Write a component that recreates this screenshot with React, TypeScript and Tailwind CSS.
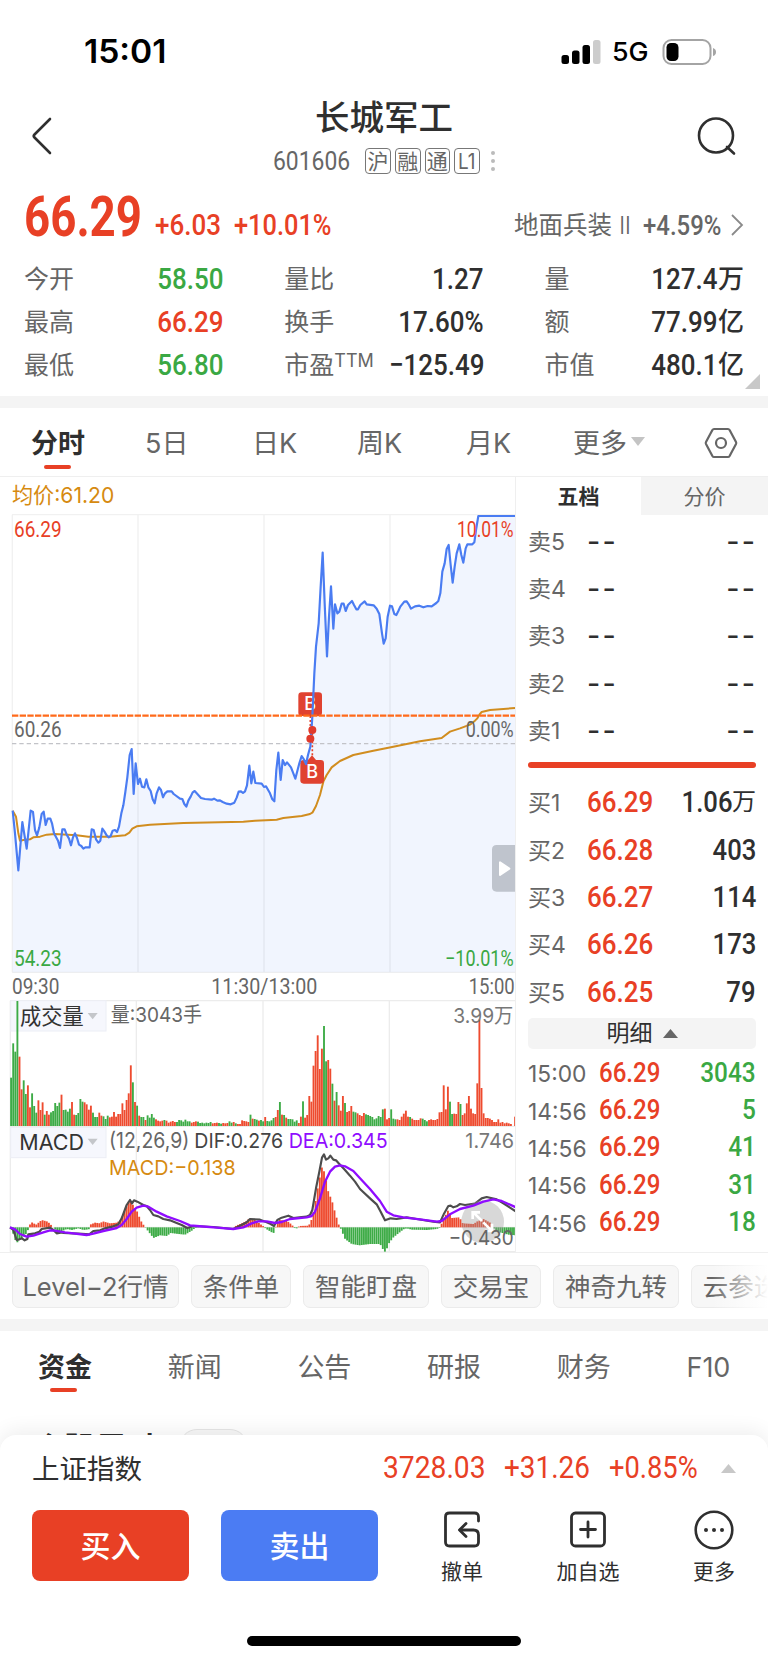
import { clsx } from 'clsx'

const NUM = "font-['Roboto','Noto_Sans_CJK_SC',sans-serif]"
const RED = '#e84025'
const GREEN = '#3aa843'

const stats = [
  [
    { label: '今开', value: '58.50', color: 'text-[#3aa843]' },
    { label: '最高', value: '66.29', color: 'text-[#e84025]' },
    { label: '最低', value: '56.80', color: 'text-[#3aa843]' },
  ],
  [
    { label: '量比', value: '1.27', color: 'text-[#2f2f2f]' },
    { label: '换手', value: '17.60%', color: 'text-[#2f2f2f]' },
    { label: '市盈', sup: 'TTM', value: '−125.49', color: 'text-[#2f2f2f]' },
  ],
  [
    { label: '量', value: '127.4', unit: '万', color: 'text-[#2f2f2f]' },
    { label: '额', value: '77.99', unit: '亿', color: 'text-[#2f2f2f]' },
    { label: '市值', value: '480.1', unit: '亿', color: 'text-[#2f2f2f]' },
  ],
]

const sells = ['卖5', '卖4', '卖3', '卖2', '卖1']
const buys = [
  { label: '买1', price: '66.29', qty: '1.06', unit: '万' },
  { label: '买2', price: '66.28', qty: '403' },
  { label: '买3', price: '66.27', qty: '114' },
  { label: '买4', price: '66.26', qty: '173' },
  { label: '买5', price: '66.25', qty: '79' },
]
const trades = [
  ['15:00', '3043'],
  ['14:56', '5'],
  ['14:56', '41'],
  ['14:56', '31'],
  ['14:56', '18'],
]

// chart data, in @3x points
const PRICE =
  '38,932 45,1000 55,1111 67,966 80,1046 92,932 99,936 105,990 111,1006 118,982 125,942 131,935 137,975 143,956 151,956 156,970 162,1000 174,1022 180,1044 187,988 194,988 200,1004 207,1016 213,1036 219,1012 225,1000 231,1014 237,1034 244,1038 250,1046 256,1042 269,1042 275,988 281,990 288,1018 295,1028 301,1022 307,986 313,994 320,1006 326,1012 332,1008 338,992 345,990 351,996 357,980 364,940 370,916 376,876 382,832 389,765 395,747 401,882 407,790 414,852 420,836 426,860 433,862 439,838 445,862 452,873 458,898 464,910 470,880 477,862 483,870 489,892 495,880 502,874 515,874 521,882 540,896 547,897 553,912 559,920 565,902 572,890 578,877 584,873 603,894 615,897 635,899 642,896 652,902 660,901 668,906 680,911 692,913 703,908 710,893 716,875 723,874 729,879 735,874 741,856 748,797 754,850 760,815 766,849 785,851 792,861 798,859 810,880 817,898 823,904 829,810 835,758 842,840 848,780 855,795 861,787 873,802 880,820 886,836 898,790 905,768 911,777 918,792 924,765 931,740 937,650 943,520 948,440 956,370 962,260 968,158 974,310 981,469 987,350 993,259 1000,386 1005,313 1012,340 1018,335 1025,311 1031,311 1037,333 1044,315 1056,303 1062,315 1069,328 1074,328 1081,315 1094,304 1100,313 1121,316 1130,326 1138,342 1146,400 1151,431 1157,415 1163,350 1170,317 1176,319 1183,342 1189,345 1195,333 1201,320 1213,305 1220,304 1226,313 1233,326 1245,319 1258,317 1270,322 1283,318 1295,319 1309,309 1315,303 1321,280 1327,215 1334,190 1340,147 1346,135 1352,195 1358,248 1364,200 1370,160 1378,133 1384,165 1390,188 1397,145 1402,133 1417,133 1423,127 1428,90 1435,48 1545,48'
const AVG =
  '38,932 48,950 55,1000 60,1022 70,1020 90,1018 100,1012 120,1010 140,1004 165,1002 230,1006 265,1010 330,1010 375,1006 388,998 397,986 410,979 450,974 550,969 730,965 765,962 830,959 850,954 905,948 930,942 938,937 948,918 960,885 970,845 980,825 995,802 1020,783 1060,765 1120,752 1180,740 1260,724 1325,714 1350,695 1380,685 1410,674 1425,662 1432,655 1438,644 1445,636 1470,630 1545,624'

// one bar per minute, negative means the price fell in that minute
const VOLUME = [
  -145, -248, -223, -375, 208, 110, -137, -96, 122, 56, -98, -60, -40, 77, 48, 71, -34, 45, 34, -41, -45, -69, -60, -70,
  94, -48, -49, -43, -52, 72, 34, -33, -39, -81, -73, 71, 65, 49, 61, -40, -27, -27, 40, 31, -29, -21, -31, 26, 28, 42, 28,
  36, 36, 68, 48, 78, 98, 182, -131, 72, -61, 31, -27, -27, 18, -32, -25, -36, -25, 20, 16, 14, 16, -18, 16, 10, 13, 15,
  12, -12, -18, -17, -13, -19, -14, -14, 10, 12, 14, -13, -9, -10, -8, -10, -9, -12, 8, 9, 10, -9, -7, 9, 8, 9, -14, -10,
  12, -8, 6, 6, 17, 15, 14, 12, -34, 22, -21, -19, 16, -18, -14, 27, -15, -14, -17, -24, 27, 48, -72, 34, -33, 25, -21,
  -21, -20, -13, -17, 9, 28, -74, 25, 33, 90, 73, 181, 225, 272, 171, 232, -300, -194, 198, 172, -127, 76, -102, 62, 46,
  90, -69, 42, 45, 60, -43, -41, 38, 33, 30, 39, -35, -33, -30, -27, -20, -23, -30, -27, -50, 52, 20, 24, -50, -22, -20,
  20, 18, 28, 37, 46, 28, -27, 22, 18, 18, 18, 23, -22, -18, -14, 18, 20, 18, 18, 21, 41, 42, 122, 50, 118, -73, -36, 37,
  36, 72, -66, 33, 38, 68, 90, 52, 38, 36, 128, 320, 114, 38, 24, 24, 22, 18, 12, 12, 20, 10, 12, 8, 10, 8, 6, 0, 28,
]

const HIST = [
  [33, 0], [49, -48], [58, -38], [70, -28], [82, -15], [86, 4], [95, 15], [108, 8], [125, 22], [143, 17], [158, 2],
  [162, -5], [180, -14], [200, -5], [215, -8], [235, -3], [250, -8], [266, -6], [270, 8], [285, 14], [300, 12],
  [308, 18], [330, 12], [350, 14], [362, 22], [372, 45], [389, 84], [400, 65], [410, 50], [422, 20], [433, 3],
  [440, -6], [460, -32], [480, -24], [500, -26], [512, -17], [535, -20], [555, -22], [575, -10], [585, -2], [600, 0],
  [700, 0], [710, 6], [725, 12], [738, 18], [748, 27], [762, 24], [775, 14], [790, 3], [797, -4], [820, -18],
  [825, -5], [829, 10], [838, 22], [860, 20], [875, 8], [883, -2], [890, -3], [898, 4], [925, 5], [930, 12],
  [937, 30], [945, 70], [955, 130], [967, 187], [975, 155], [987, 95], [993, 90], [1002, 55], [1015, 10],
  [1022, -4], [1035, -35], [1055, -50], [1078, -54], [1110, -50], [1140, -50], [1152, -72], [1157, -74],
  [1165, -50], [1180, -30], [1195, -18], [1210, -6], [1220, -3], [1235, -7], [1280, -8], [1310, -5], [1320, -1],
  [1328, 20], [1345, 53], [1355, 28], [1378, 30], [1388, 12], [1420, 10], [1432, 18], [1450, 25], [1470, 14],
  [1478, 0], [1485, -6], [1500, -15], [1525, -22], [1548, -24],
]
const DIF =
  '30,727 40,735 50,765 58,763 66,760 74,766 82,762 85,748 105,745 118,740 125,732 150,728 160,735 170,745 185,742 190,744 235,746 268,748 280,738 300,736 315,730 340,724 355,718 365,700 380,660 390,645 396,655 402,646 412,650 430,660 440,663 450,675 460,690 475,694 490,702 510,706 530,714 545,720 562,729 580,723 640,726 700,732 720,722 740,712 750,702 780,704 800,712 812,717 822,723 832,705 845,698 865,692 880,699 905,696 920,695 930,690 937,675 948,610 958,560 966,518 972,508 978,524 985,520 991,512 1000,524 1008,526 1016,535 1035,555 1050,572 1065,590 1080,612 1110,640 1130,658 1142,680 1155,706 1172,700 1190,702 1220,697 1250,702 1300,710 1320,712 1332,686 1345,663 1352,662 1360,667 1370,664 1380,657 1395,660 1425,656 1445,640 1460,636 1490,643 1510,655 1530,668 1548,680'
const DEA =
  '30,727 45,733 60,747 80,755 100,752 130,742 150,736 165,737 195,742 260,750 280,746 310,738 350,729 365,720 380,702 395,680 410,668 430,662 445,665 470,680 500,694 540,708 570,721 590,723 650,728 700,732 730,727 755,715 775,709 800,709 825,714 845,711 870,702 920,697 935,693 945,680 960,640 975,590 990,560 1005,545 1020,541 1035,544 1060,558 1080,580 1110,612 1140,648 1160,680 1180,691 1210,697 1260,703 1310,710 1325,708 1350,688 1380,672 1420,662 1450,650 1480,643 1505,648 1548,667'

const histAt = (x: number) => {
  const i = HIST.findIndex((p) => p[0] >= x)
  if (i <= 0) return 0
  const [x0, y0] = HIST[i - 1]
  const [x1, y1] = HIST[i]
  return y0 + ((y1 - y0) * (x - x0)) / (x1 - x0)
}

type LabelProps = {
  x: number
  y: number
  w: number
  fill?: string
  size?: number
  sans?: boolean
  weight?: number
  children: string
}

const Label = ({ x, y, w, fill = '#666', size = 66, sans, weight = 400, children }: LabelProps) => (
  <text
    x={x}
    y={y}
    textLength={w}
    lengthAdjust="spacingAndGlyphs"
    fill={fill}
    fontSize={size}
    fontWeight={weight}
    fontFamily={sans ? "Inter, 'Noto Sans CJK SC', sans-serif" : 'Roboto, sans-serif'}
  >
    {children}
  </text>
)

const Buy = ({ x, y }: { x: number; y: number }) => (
  <g>
    <rect x={x} y={y} width="71" height="71" rx="10" fill="#e04230" />
    <text x={x + 35.5} y={y + 54} textAnchor="middle" fontSize="54" fontWeight="500" fill="#fff" fontFamily="Inter, sans-serif">
      B
    </text>
  </g>
)

const PriceChart = () => (
  <svg width="516" height="486" viewBox="0 42 1548 1458" className="block max-w-none">
    <path d="M36 44H1548M36 1417H1548M37 44V1417M414 44V1417M792 44V1417M1170 44V1417" stroke="#f1f1f1" strokeWidth="4" />
    <polygon points={`${PRICE} 1545,1417 38,1417`} fill="#4a7cf2" fillOpacity="0.08" />
    <path d="M36 731H1545" stroke="#c2c3c8" strokeWidth="4" strokeDasharray="13 9" />
    <polyline points={AVG} fill="none" stroke="#d18d1f" strokeWidth="6" strokeLinejoin="round" />
    <Buy x={895} y={577} />
    <path d="M936 766l-14 16h28z" fill="#e04230" />
    <Buy x={901} y={780} />
    <path d="M931 648V710M937 700V768" stroke={RED} strokeWidth="5" strokeDasharray="6 6" />
    <polyline points={PRICE} fill="none" stroke="#4a7cf2" strokeWidth="6.5" strokeLinejoin="round" />
    <circle cx="937" cy="690" r="12" fill="#e03a2c" />
    <circle cx="931" cy="716" r="12" fill="#e03a2c" />
    <path d="M36 647H1545" stroke="#ff6a1a" strokeWidth="7" strokeDasharray="19 4" />
    <Label x={42} y={111} w={143} fill={RED}>66.29</Label>
    <Label x={1371} y={111} w={170} fill={RED}>10.01%</Label>
    <Label x={42} y={711} w={143}>60.26</Label>
    <Label x={1397} y={711} w={144}>0.00%</Label>
    <Label x={42} y={1397} w={143} fill={GREEN}>54.23</Label>
    <Label x={1335} y={1397} w={206} fill={GREEN}>−10.01%</Label>
    <Label x={36} y={1481} w={142}>09:30</Label>
    <Label x={634} y={1481} w={318}>11:30/13:00</Label>
    <Label x={1406} y={1481} w={138}>15:00</Label>
    <path d="M1548 1035h-58q-14 0-14 14v112q0 14 14 14h58z" fill="#bfc4cd" />
    <path d="M1500 1087v38l28-19z" fill="#fff" stroke="#fff" strokeWidth="6" strokeLinejoin="round" />
  </svg>
)

const VolumeChart = () => (
  <svg width="516" height="127" viewBox="0 45 1548 381" className="block max-w-none">
    <path d="M30 47H1548M30 424H1548M31 47V426M409 47V426M789 47V426M1168 47V426" stroke="#ececec" strokeWidth="4" />
    <rect x="32" y="47" width="286" height="91" fill="#f6f7fd" stroke="#eceef5" strokeWidth="3" />
    {VOLUME.map((v, i) => (
      <rect key={i} x={30.5 + i * 6.3} y={423 - Math.abs(v)} width="5.6" height={Math.abs(v)} fill={v > 0 ? '#ee4b2f' : '#3dab46'} />
    ))}
    <Label x={60} y={117} w={191} size={64} fill="#333" sans>成交量</Label>
    <path d="M263 84h30l-15 19z" fill="#c4c6ca" />
    <Label x={332} y={110} w={274} size={62} sans>量:3043手</Label>
    <Label x={1360} y={113} w={180} size={61} fill="#777" sans>3.99万</Label>
  </svg>
)

const MacdChart = () => (
  <svg width="516" height="126" viewBox="0 426 1548 378" className="block max-w-none">
    <path d="M30 800H1548M31 426V800M409 426V800M789 426V800M1168 426V800" stroke="#ececec" strokeWidth="4" />
    <rect x="32" y="427" width="286" height="91" fill="#f6f7fd" stroke="#eceef5" strokeWidth="3" />
    <path d="M30 727H1548" stroke="#e2e2e2" strokeWidth="2" />
    {VOLUME.map((_, i) => {
      const v = histAt(33 + i * 6.3)
      return <rect key={i} x={30.5 + i * 6.3} y={v > 0 ? 727 - v : 727} width="5.6" height={Math.abs(v)} fill={v > 0 ? '#ee4b2f' : '#3dab46'} />
    })}
    <polyline points={DIF} fill="none" stroke="#4d4d4d" strokeWidth="6.5" strokeLinejoin="round" />
    <circle cx="1448" cy="710" r="64" fill="#999" fillOpacity="0.38" />
    <path d="M1446 708l-26-26M1418 702v-20h22M1450 712l24 24M1476 716v22h-22" fill="none" stroke="#fff" strokeWidth="8" />
    <polyline points={DEA} fill="none" stroke="#8f0cff" strokeWidth="7" strokeLinejoin="round" />
    <Label x={58} y={495} w={194} size={66} fill="#333" sans>MACD</Label>
    <path d="M263 461h30l-15 19z" fill="#c4c6ca" />
    <Label x={327} y={488} w={241} size={64} sans>(12,26,9)</Label>
    <Label x={583} y={488} w={266} size={62} fill="#444" sans>DIF:0.276</Label>
    <Label x={866} y={488} w={297} size={62} fill="#8f0cff" sans>DEA:0.345</Label>
    <Label x={327} y={571} w={380} size={62} fill="#d68a10" sans>MACD:−0.138</Label>
    <Label x={1396} y={490} w={146} size={61} fill="#777" sans>1.746</Label>
    <Label x={1346} y={779} w={195} size={61} sans>−0.430</Label>
  </svg>
)

const StatusBar = () => (
  <div className="flex h-[90px] items-start justify-between pl-[84px] pr-[51px] pt-[31px]">
    <div className="origin-left scale-x-[1.05] text-[32px] font-semibold leading-[41px] text-black">15:01</div>
    <div className="flex items-center pt-[2px] text-black">
      <svg width="40" height="36" viewBox="0 0 40 36">
        <rect x="0.5" y="21" width="7.5" height="9" rx="2.5" />
        <rect x="11" y="16.500" width="7.500" height="13.500" rx="2.5" />
        <rect x="21.500" y="11" width="7.500" height="19" rx="2.5" />
        <rect x="32" y="6" width="7.500" height="24" rx="2.5" fill="#ccc" />
      </svg>
      <span className="ml-[11px] w-[38px] origin-left scale-x-[1.03] pt-px text-[26px] font-medium leading-9">5G</span>
      <svg width="55" height="36" viewBox="0 0 55 36" className="ml-[12px]">
        <rect x="1.5" y="6" width="47" height="24" rx="8" fill="none" stroke="#a4a4a4" strokeWidth="2" />
        <rect x="4.500" y="9" width="12" height="18" rx="4.5" />
        <path d="M51 14q3 1 3 4t-3 4z" fill="#a4a4a4" />
      </svg>
    </div>
  </div>
)

const Header = () => (
  <div className="flex h-[95px] justify-between pl-[31px] pr-[31px]">
    <svg width="22" height="92" viewBox="0 0 22 92" fill="none" stroke="#2f2f2f" strokeWidth="2.6" strokeLinecap="round" strokeLinejoin="round">
      <path d="M19 29L3.500 44.500Q2 46 3.500 47.500L19 63" />
    </svg>
    <div className="flex flex-col items-center pl-[18px]">
      <h1 className="pt-[4px] text-[34.500px] font-medium leading-[48px] text-[#2f2f2f]">长城军工</h1>
      <div className="flex items-center gap-1 pt-[5px]">
        <span className={clsx(NUM, 'w-[88px] origin-left scale-x-[0.88] text-[26px] leading-7 text-[#666]')}>601606</span>
        {['沪', '融', '通', 'L1'].map((t) => (
          <span key={t} className="flex h-[26px] w-[25.700px] items-center justify-center rounded-[4px] border-[1.5px] border-[#777] text-[21px] leading-none text-[#666]">
            {t === 'L1' ? <span className="scale-x-[0.9]">{t}</span> : t}
          </span>
        ))}
        <span className="ml-[7px] flex flex-col gap-1">
          <i className="size-1 rounded-full bg-[#bbb]" />
          <i className="size-1 rounded-full bg-[#bbb]" />
          <i className="size-1 rounded-full bg-[#bbb]" />
        </span>
      </div>
    </div>
    <svg width="40" height="92" viewBox="0 0 40 92" fill="none" stroke="#2f2f2f" strokeWidth="2.600">
      <circle cx="19" cy="45.500" r="17" />
      <path d="M30 57L37 63.500" strokeLinecap="round" />
    </svg>
  </div>
)

const Quote = () => (
  <div className="relative h-[211px] pl-[24px] pr-[24px]">
    <div className="flex h-[67px] items-baseline pt-[2px]">
      <span className={clsx(NUM, 'w-[131px] origin-left scale-x-[0.83] text-[55px] font-bold leading-[60px] text-[#e84025]')}>66.29</span>
      <span className={clsx(NUM, 'w-[79px] -translate-y-px origin-left scale-x-[0.88] text-[29.500px] font-medium text-[#e84025]')}>+6.03</span>
      <span className={clsx(NUM, '-translate-y-px origin-left scale-x-[0.86] text-[29.500px] font-medium text-[#e84025]')}>+10.01%</span>
      <span className="ml-auto w-[129px] shrink-0 -translate-y-0.5 whitespace-nowrap text-[24.500px] text-[#666]">
        地面兵装 <span className="inline-block text-[24px] font-light tracking-[-0.5px]">II</span>
      </span>
      <span className={clsx(NUM, 'w-[87px] shrink-0 -translate-y-px origin-left scale-x-[0.84] text-[28.500px] font-medium text-[#666]')}>+4.59%</span>
      <svg width="14" height="22" viewBox="0 0 14 22" fill="none" stroke="#8a8a8a" strokeWidth="1.800" className="shrink-0">
        <path d="M2 1l10 10L2 21" />
      </svg>
    </div>
    <div className="flex justify-between pt-[5px]">
      {stats.map((col, c) => (
        <div key={c} className="w-[199.500px]">
          {col.map((s) => (
            <div key={s.label} className="flex h-[43.300px] items-center justify-between">
              <span className="whitespace-nowrap text-[25px] leading-8 text-[#666]">
                {s.label}
                {s.sup && <span className="inline-block -translate-y-[7px] text-[18px] leading-4">{s.sup}</span>}
              </span>
              <span className={clsx(NUM, 'flex items-center text-[30px] font-medium leading-8', s.color)}>
                <span className="origin-right scale-x-[0.865]">{s.value}</span>
                {s.unit && <span className="text-[26px]">{s.unit}</span>}
              </span>
            </div>
          ))}
        </div>
      ))}
    </div>
    <svg width="15" height="15" viewBox="0 0 15 15" className="absolute bottom-[7px] right-[8px]">
      <path d="M15 0v15H0z" fill="#c8c8c8" />
    </svg>
  </div>
)

const ChartTabs = () => (
  <div className="flex h-[69px] items-center border-b border-[#efefef] pl-[31px] pt-[3px] text-[27px] leading-9 text-[#666]">
    <div className="relative w-[114px] font-semibold text-[#2f2f2f]">
      分时
      <i className="absolute -bottom-[7px] left-[13px] h-1 w-[27px] rounded-full bg-[#e84025]" />
    </div>
    <div className="w-[107px]">5日</div>
    <div className="w-[105px]">日K</div>
    <div className="w-[109px]">周K</div>
    <div className="w-[107px]">月K</div>
    <div className="flex w-[131px] items-center gap-1">
      更多
      <svg width="14" height="9" viewBox="0 0 14 9" className="-translate-y-0.5">
        <path d="M0 0h14L7 9z" fill="#c4c4c4" />
      </svg>
    </div>
    <svg width="34" height="32" viewBox="0 0 34 32" fill="none" stroke="#666" strokeWidth="2.200" strokeLinejoin="round" className="-translate-y-px">
      <path d="M10 2h14q1 0 1.600 1L32 15q.5 1 0 2l-6.400 12q-.6 1-1.600 1H10q-1 0-1.600-1L2 17q-.5-1 0-2L8.400 3q.6-1 1.600-1z" />
      <circle cx="17" cy="16" r="5" />
    </svg>
  </div>
)

const OrderBook = () => (
  <div className="w-[253px] border-l border-[#efefef]">
    <div className="flex h-[38px] text-[21px] leading-[39px]">
      <div className="w-[125px] text-center font-semibold text-[#2f2f2f]">五档</div>
      <div className="flex-1 bg-[#f4f4f4] text-center text-[#666]">分价</div>
    </div>
    <div className="pl-[12px] pr-[12px]">
      <div className="pt-[3px]">
        {sells.map((s) => (
          <div key={s} className="flex h-[47.350px] items-center text-[23px] leading-8 text-[#666]">
            <span className="w-[59px]">{s}</span>
            <span className="origin-left scale-x-[1.06] text-[27px] font-medium tracking-[2.200px] text-[#2f2f2f]">--</span>
            <span className="-mr-px ml-auto origin-right scale-x-[1.06] text-[27px] font-medium tracking-[2.200px] text-[#2f2f2f]">--</span>
          </div>
        ))}
      </div>
      <div className="mt-[7px] h-[6px] rounded-full bg-[#e84025]" />
      <div className="pt-[11px]">
        {buys.map((b) => (
          <div key={b.label} className="flex h-[47.350px] items-center text-[23px] leading-8 text-[#666]">
            <span className="w-[59px] pt-[2px]">{b.label}</span>
            <span className={clsx(NUM, 'origin-left scale-x-[0.88] text-[29.500px] font-medium text-[#e84025]')}>{b.price}</span>
            <span className={clsx(NUM, 'ml-auto flex text-[29.500px] font-medium text-[#2f2f2f]')}>
              <span className="origin-right scale-x-[0.87]">{b.qty}</span>
              {b.unit && <span className="text-[24px] font-normal">{b.unit}</span>}
            </span>
          </div>
        ))}
      </div>
      <div className="mt-[2.500px] flex h-[31px] items-center justify-center gap-[10px] rounded-[5px] bg-[#f4f4f4] pt-px text-[23px] leading-none text-[#2f2f2f]">
        明细
        <svg width="15" height="9" viewBox="0 0 15 9">
          <path d="M0 9L7.500 0 15 9z" fill="#666" />
        </svg>
      </div>
      <div className="pt-[5px]">
        {trades.map(([time, qty], i) => (
          <div key={i} className="flex h-[37.400px] items-center leading-8">
            <span className="w-[71px] origin-left scale-x-[0.97] pt-[3px] text-[23.500px] text-[#666]">{time}</span>
            <span className={clsx(NUM, 'origin-left scale-x-[0.86] text-[28px] font-medium text-[#e84025]')}>{'66.29'}</span>
            <span className={clsx(NUM, 'ml-auto origin-right scale-x-[0.87] text-[28px] font-medium text-[#3aa843]')}>{qty}</span>
          </div>
        ))}
      </div>
    </div>
  </div>
)

const Tools = () => (
  <div className="relative flex h-[67px] gap-[12px] overflow-hidden border-t border-[#efefef] pl-[12px] pt-[12px]">
    {['Level−2行情', '条件单', '智能盯盘', '交易宝', '神奇九转', '云参选'].map((t, i) => (
      <div
        key={t}
        className={clsx(
          'flex h-[43px] shrink-0 items-center justify-center whitespace-nowrap rounded-[7px] border border-[#ebebeb] bg-[#f7f7f7] text-[25.500px] leading-none text-[#666]',
          i === 0 && 'w-[167px]',
          i === 2 || i === 4 ? 'w-[126px]' : i > 0 && 'w-[100px]'
        )}
      >
        {t}
      </div>
    ))}
    <div className="absolute right-0 top-0 h-full w-[56px] bg-gradient-to-r from-white/0 to-white" />
  </div>
)

const InfoTabs = () => (
  <div className="h-[104px] overflow-hidden pl-[38px] pt-[19px] text-[27px] leading-9 text-[#666]">
    <div className="flex">
      <div className="relative w-[129.700px] shrink-0 font-semibold text-[#2f2f2f]">
        资金
        <i className="absolute -bottom-[6px] left-[12px] h-1 w-[27px] rounded-full bg-[#e84025]" />
      </div>
      {['新闻', '公告', '研报', '财务', 'F10'].map((t) => (
        <div key={t} className="w-[129.700px] shrink-0">{t}</div>
      ))}
    </div>
    <div className="-ml-[6px] mt-[43px] flex gap-[19px] text-[32px] font-semibold leading-[40px] text-[#2f2f2f]">
      个股异动
      <span className="h-9 w-[69px] rounded-full border border-[#e6e6e6] bg-[#f8f8f8]" />
    </div>
  </div>
)

const BottomSheet = () => (
  <div className="relative h-[228px] rounded-t-[16px] bg-white pt-[10px] shadow-[0_-4px_20px_rgba(0,0,0,0.07)]">
    <div className="flex h-[46px] items-center pl-[32px] pr-[32px]">
      <span className="pt-px text-[27.500px] leading-9 text-[#2f2f2f]">上证指数</span>
      <span className={clsx(NUM, 'ml-auto flex text-[31px] leading-9 text-[#e84025]')}>
        <span className="w-[121px] origin-left scale-x-[0.91]">3728.03</span>
        <span className="w-[105px] origin-left scale-x-[0.9]">+31.26</span>
        <span className="w-[112px] origin-left scale-x-[0.88]">+0.85%</span>
      </span>
      <svg width="15" height="9" viewBox="0 0 15 9">
        <path d="M0 9L7.500 0 15 9z" fill="#c8c8c8" />
      </svg>
    </div>
    <div className="flex pl-[32px] pt-[19px] text-[21px] leading-7 text-[#2f2f2f]">
      <button className="h-[71px] w-[157px] shrink-0 rounded-[8px] bg-[#e84025] text-[30px] font-medium text-white">买入</button>
      <button className="ml-[32px] h-[71px] w-[157px] shrink-0 rounded-[8px] bg-[#4b7cf3] text-[30px] font-medium text-white">卖出</button>
      <div className="ml-[21px] flex w-[126px] shrink-0 flex-col items-center">
        <svg width="40" height="40" viewBox="0 0 40 40" fill="none" stroke="#2f2f2f" strokeWidth="2.800" strokeLinecap="round" strokeLinejoin="round">
          <path d="M36.500 11V7q0-4-4-4H7.500q-4 0-4 4v25q0 4 4 4h25q4 0 4-4v-7q0-5-5-5H18" />
          <path d="M24 13.500L17.500 20l6.500 6.500" />
        </svg>
        <span className="mt-[8px]">撤单</span>
      </div>
      <div className="flex w-[126px] shrink-0 flex-col items-center">
        <svg width="40" height="40" viewBox="0 0 40 40" fill="none" stroke="#2f2f2f" strokeWidth="2.800" strokeLinecap="round">
          <rect x="3.500" y="3" width="33" height="33" rx="4" />
          <path d="M20 12v15M12.500 19.500h15" />
        </svg>
        <span className="mt-[8px]">加自选</span>
      </div>
      <div className="flex w-[126px] shrink-0 flex-col items-center">
        <svg width="40" height="40" viewBox="0 0 40 40" fill="#2f2f2f">
          <circle cx="20" cy="20" r="18.300" fill="none" stroke="#2f2f2f" strokeWidth="2.600" />
          <circle cx="12" cy="20" r="2" />
          <circle cx="20" cy="20" r="2" />
          <circle cx="28" cy="20" r="2" />
        </svg>
        <span className="mt-[8px]">更多</span>
      </div>
    </div>
    <div className="mx-auto mt-[50px] h-[10px] w-[274px] rounded-full bg-black" />
  </div>
)

const App = () => {
  return (
    <div className="flex h-[1663px] w-[768px] flex-col overflow-hidden bg-white font-['Inter','Noto_Sans_CJK_SC',sans-serif]">
      <StatusBar />
      <Header />
      <Quote />
      <div className="h-[12px] bg-[#f4f4f4]" />
      <ChartTabs />
      <div className="flex h-[775px]">
        <div className="w-[515px]">
          <div className="h-[37px] pl-[12px] text-[22px] leading-9 text-[#d68a10]">
            <span className="inline-block origin-left scale-x-[0.96]">均价:61.20</span>
          </div>
          <PriceChart />
          <VolumeChart />
          <MacdChart />
        </div>
        <OrderBook />
      </div>
      <Tools />
      <div className="h-[12px] bg-[#f4f4f4]" />
      <InfoTabs />
      <BottomSheet />
    </div>
  )
}

export default App
